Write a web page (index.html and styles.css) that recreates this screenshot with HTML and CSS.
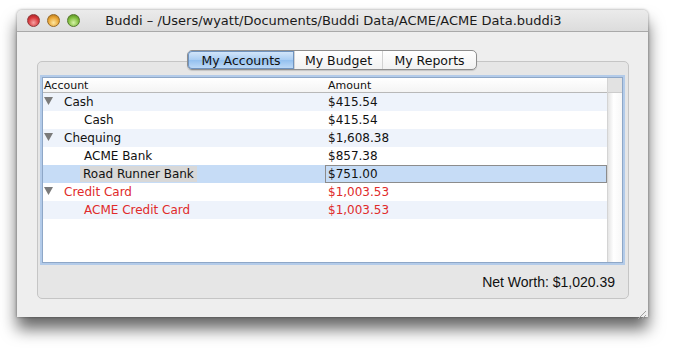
FILE: index.html
```html
<!DOCTYPE html>
<html lang="en">

<head>
    <meta charset="UTF-8">
    <meta name="viewport" content="width=device-width, initial-scale=1.0">
    <title>Buddi</title>
    <link rel="stylesheet" href="styles.css">
</head>

<body>
    <div class="window">
        <div class="titlebar">
            <div class="lights">
                <span class="light red"></span>
                <span class="light yellow"></span>
                <span class="light green"></span>
            </div>
            <div class="title">Buddi &ndash; /Users/wyatt/Documents/Buddi Data/ACME/ACME Data.buddi3</div>
        </div>

        <div class="content">
            <div class="tabs">
                <div class="tab active">My Accounts</div>
                <div class="tab">My Budget</div>
                <div class="tab">My Reports</div>
            </div>

            <div class="groupbox">
                <div class="pane">
                    <div class="table">
                        <div class="header">
                            <div class="col-account">Account</div>
                            <div class="col-amount">Amount</div>
                        </div>
                        <div class="row stripe">
                            <div class="col-account parent">
                                <svg class="disclosure" width="9" height="8" viewBox="0 0 9 8"><polygon points="0,0 9,0 4.5,8" fill="#7a7a7a"/></svg>
                                <span>Cash</span>
                            </div>
                            <div class="col-amount">$415.54</div>
                        </div>
                        <div class="row">
                            <div class="col-account child"><span>Cash</span></div>
                            <div class="col-amount">$415.54</div>
                        </div>
                        <div class="row stripe">
                            <div class="col-account parent">
                                <svg class="disclosure" width="9" height="8" viewBox="0 0 9 8"><polygon points="0,0 9,0 4.5,8" fill="#7a7a7a"/></svg>
                                <span>Chequing</span>
                            </div>
                            <div class="col-amount">$1,608.38</div>
                        </div>
                        <div class="row">
                            <div class="col-account child"><span>ACME Bank</span></div>
                            <div class="col-amount">$857.38</div>
                        </div>
                        <div class="row selected">
                            <div class="col-account child"><span class="cell-hl">Road Runner Bank</span></div>
                            <div class="col-amount focused">$751.00</div>
                        </div>
                        <div class="row debt">
                            <div class="col-account parent">
                                <svg class="disclosure" width="9" height="8" viewBox="0 0 9 8"><polygon points="0,0 9,0 4.5,8" fill="#7a7a7a"/></svg>
                                <span>Credit Card</span>
                            </div>
                            <div class="col-amount">$1,003.53</div>
                        </div>
                        <div class="row stripe debt">
                            <div class="col-account child"><span>ACME Credit Card</span></div>
                            <div class="col-amount">$1,003.53</div>
                        </div>
                    </div>
                    <div class="scrolltrack">
                        <div class="corner"></div>
                    </div>
                </div>
                <div class="networth">Net Worth: $1,020.39</div>
            </div>
        </div>

        <div class="grip">
            <svg width="11" height="11" viewBox="0 0 11 11">
                <line x1="10" y1="2" x2="2" y2="10" stroke="#a0a0a0" stroke-width="1"/>
                <line x1="10" y1="6" x2="6" y2="10" stroke="#a0a0a0" stroke-width="1"/>
                <line x1="10" y1="9" x2="9" y2="10" stroke="#a0a0a0" stroke-width="1"/>
            </svg>
        </div>
    </div>
</body>

</html>
```

FILE: styles.css
```css
/* Page */
body {
    margin: 0;
    height: 349px;
    background-color: #ffffff;
    font-family: "DejaVu Sans", "Liberation Sans", sans-serif;
    color: #111111;
}

/* Window frame */
.window {
    position: relative;
    width: 631px;
    height: 307px;
    margin: 10px 0 0 17px;
    background-color: #eeeeee;
    border-radius: 5px 5px 0 0;
    box-shadow: 0 12px 16px rgba(0, 0, 0, 0.6), 0 0 3px rgba(0, 0, 0, 0.4);
    display: flex;
    flex-direction: column;
}

.titlebar {
    height: 21px;
    display: flex;
    align-items: center;
    position: relative;
    background: linear-gradient(#ebebeb, #dcdcdc);
    border-bottom: 1px solid #a9a9a9;
    border-radius: 5px 5px 0 0;
}

.lights {
    display: flex;
    gap: 7px;
    padding-left: 10px;
}

.light {
    width: 13px;
    height: 13px;
    border-radius: 50%;
    box-sizing: border-box;
}

.light.red {
    background: radial-gradient(circle at 50% 70%, #f7a2a2, #d7383c 55%, #9b1c1f);
    border: 1px solid #8f3a3c;
}

.light.yellow {
    background: radial-gradient(circle at 50% 70%, #fde7a2, #e9a535 55%, #a66a12);
    border: 1px solid #986b27;
}

.light.green {
    background: radial-gradient(circle at 50% 70%, #d6f3a8, #80bd3e 55%, #4a7d17);
    border: 1px solid #55792e;
}

.title {
    flex: 1;
    text-align: center;
    font-size: 13px;
    color: #1a1a1a;
    margin-left: -61px;
}

/* Content area */
.content {
    flex: 1;
    padding: 18px 19px 18px 20px;
    display: flex;
    flex-direction: column;
}

.tabs {
    align-self: center;
    display: flex;
    height: 20px;
    box-sizing: border-box;
    border: 1px solid #8e8e8e;
    border-radius: 5px;
    background: linear-gradient(#ffffff, #f1f1f1);
    font-size: 12.5px;
    position: relative;
    z-index: 1;
    margin-left: -2px;
    box-shadow: 0 1px 1px rgba(0, 0, 0, 0.15);
}

.tab {
    display: flex;
    align-items: center;
    justify-content: center;
    border-left: 1px solid #d2d2d2;
    color: #111111;
}

.tab:nth-child(1) {
    width: 106px;
    border-left: none;
}

.tab:nth-child(2) {
    width: 87px;
}

.tab:nth-child(3) {
    width: 93px;
}

.tab.active {
    background: linear-gradient(#d7e8fa, #a9cdf3 50%, #93c0ef 51%, #c2dcf7);
    border-radius: 4px 0 0 4px;
    box-shadow: inset 0 0 0 1px #6f93bf;
}

/* Group box under the tabs */
.groupbox {
    flex: 1;
    margin-top: -9px;
    border: 1px solid #c5c5c5;
    border-radius: 5px;
    background-color: #e6e6e6;
    padding: 15px 5px 0 4px;
    display: flex;
    flex-direction: column;
}

.pane {
    height: 184px;
    border: 1px solid #8ea7c7;
    box-shadow: 0 0 0 2px #b3cbe9;
    background-color: #ffffff;
    display: flex;
}

.table {
    flex: 1;
    font-size: 12px;
}

.header {
    display: flex;
    height: 15px;
    align-items: center;
    font-size: 11px;
    border-bottom: 1px solid #b8b8b8;
    background: linear-gradient(#ffffff, #f4f4f4);
    box-sizing: border-box;
}

.row {
    display: flex;
    height: 18px;
    align-items: center;
}

.row.stripe {
    background-color: #eef3fb;
}

.row.selected {
    background-color: #c6dcf6;
}

.row.debt {
    color: #e02a2a;
}

.col-account {
    width: 282px;
    box-sizing: border-box;
    display: flex;
    align-items: center;
    padding-left: 1px;
}

.col-account.parent span {
    margin-left: 11px;
}

.col-account.child {
    padding-left: 41px;
}

.disclosure {
    margin-top: -2px;
}

.cell-hl {
    background-color: #d8d8d8;
    padding: 1px 3px;
    margin-left: -4px;
}

.col-amount {
    flex: 1;
    padding-left: 3px;
    height: 100%;
    display: flex;
    align-items: center;
}

.col-amount.focused {
    border: 1px solid #8c8c8c;
    box-sizing: border-box;
    padding-left: 2px;
}

.scrolltrack {
    width: 14px;
    background: linear-gradient(to right, #e4e4e4, #ffffff 40%, #f7f7f7);
    border-left: 1px solid #d4d4d4;
}

.corner {
    height: 15px;
    background-color: #e2e2e2;
    border-bottom: 1px solid #cccccc;
    box-sizing: border-box;
}

.networth {
    flex: 1;
    display: flex;
    align-items: center;
    justify-content: flex-end;
    padding-right: 8px;
    padding-top: 2px;
    font-family: "Liberation Sans", Arial, sans-serif;
    font-size: 14px;
    color: #111111;
}

.grip {
    position: absolute;
    right: 1px;
    bottom: 1px;
    width: 11px;
    height: 11px;
}
```
